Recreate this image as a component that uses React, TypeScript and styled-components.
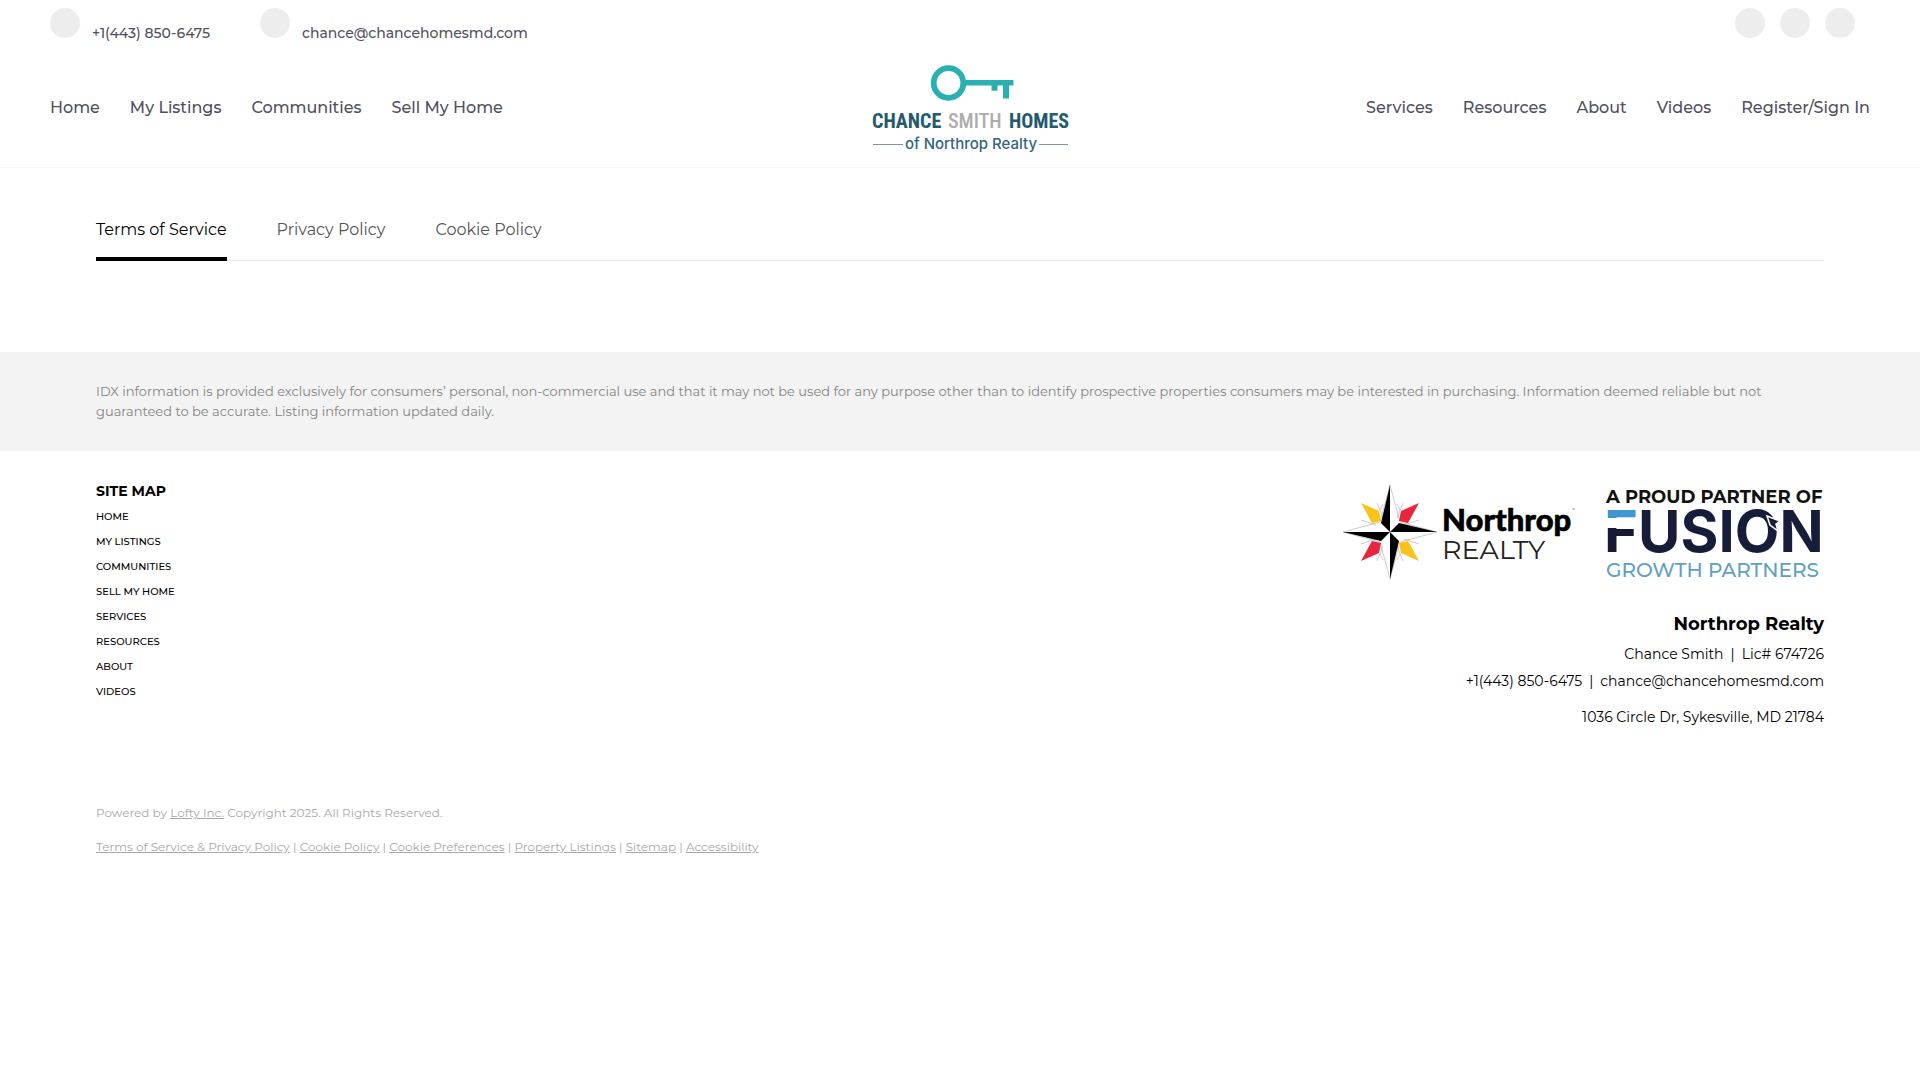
import React from "react";
import styled, { createGlobalStyle } from "styled-components";

const Global = createGlobalStyle`
  *, *::before, *::after { box-sizing: border-box; }
  body { margin: 0; background: #fff; color: #000; font-family: Montserrat, Inter, "Open Sans", sans-serif; }
  a { color: inherit; text-decoration: none; }
  ul { list-style: none; margin: 0; padding: 0; }
  h2, h3, p { margin: 0; }
`;

const Header = styled.header`
  border-bottom: 1px solid #f5f5f5;
  padding: 0 50px;
  color: #515060;
  font-weight: 500;
`;
const TopBar = styled.div`
  display: flex;
  justify-content: space-between;
  padding: 8px 0 9px;
`;
const Contacts = styled.div`
  display: flex;
  gap: 50px;
`;
const Contact = styled.a`
  display: flex;
  gap: 12px;
  height: 30px;
  font-size: 14px;
  line-height: 20px;
`;
const ContactText = styled.span`
  padding-top: 15px;
`;
const Dot = styled.span`
  display: block;
  width: 30px;
  height: 30px;
  border-radius: 50%;
  background: #ededed;
`;
const Socials = styled.div`
  display: flex;
  gap: 15px;
  padding-right: 15px;
`;
const NavBar = styled.nav`
  display: grid;
  grid-template-columns: 1fr auto 1fr;
  align-items: center;
  height: 120px;
`;
const NavList = styled.ul<{ $end?: boolean }>`
  display: flex;
  gap: 30px;
  justify-content: ${(p) => (p.$end ? "flex-end" : "flex-start")};
  padding-top: 2px;
  font-size: 16px;
  line-height: 24px;
`;
const Logo = styled.svg`
  display: block;
`;

const Main = styled.main`
  padding: 40px 5% 91px;
`;
const Tabs = styled.div`
  display: flex;
  gap: 50px;
  border-bottom: 1px solid #ebebeb;
`;
const Tab = styled.button<{ $active?: boolean }>`
  border: 0;
  border-bottom: 4px solid ${(p) => (p.$active ? "#000" : "transparent")};
  margin-bottom: -1px;
  padding: 9px 0 14px;
  background: none;
  font: inherit;
  font-size: 16px;
  line-height: 26px;
  color: ${(p) => (p.$active ? "#000" : "#555")};
  cursor: pointer;
`;

const Disclaimer = styled.section`
  padding: 29px 5% 30px;
  background: #f3f3f3;
  color: #848484;
  font-size: 13px;
  line-height: 20px;
`;
const Footer = styled.footer`
  padding: 30px 5%;
`;
const FooterTop = styled.div`
  display: flex;
  justify-content: space-between;
`;
const MapTitle = styled.h3`
  font-size: 14px;
  line-height: 20px;
  font-weight: 700;
  margin-bottom: 3px;
`;
const MapList = styled.ul`
  font-size: 10px;
  line-height: 25px;
  font-weight: 500;
`;
const Company = styled.div`
  text-align: right;
  font-size: 14px;
  line-height: 27px;
`;
const Partners = styled.div`
  display: flex;
  gap: 27px;
  justify-content: flex-end;
  margin-bottom: 28px;
`;
const CompanyName = styled.h2`
  font-size: 18px;
  line-height: 30px;
  font-weight: 700;
  margin-bottom: 2px;
`;
const Sep = styled.span`
  padding: 0 7px;
`;
const Address = styled.p`
  padding-top: 9px;
`;
const Legal = styled.div`
  display: grid;
  gap: 14px;
  margin-top: 72px;
  color: #a8a8a8;
  font-size: 12px;
  line-height: 20px;
  a { text-decoration: underline; }
`;

const leftNav = ["Home", "My Listings", "Communities", "Sell My Home"];
const rightNav = ["Services", "Resources", "About", "Videos", "Register/Sign In"];
const siteMap = [...leftNav, "Services", "Resources", "About", "Videos"];
const legalLinks = ["Terms of Service & Privacy Policy", "Cookie Policy", "Cookie Preferences", "Property Listings", "Sitemap", "Accessibility"];

const BrandLogo = () => (
  <Logo width="220" height="90" viewBox="0 0 220 90" role="img" aria-label="Chance Smith Homes">
    <g fill="#2ab0b0">
      <circle cx="98.500" cy="21" r="14.8" fill="none" stroke="#2ab0b0" strokeWidth="5.8" />
      <path d="M115 18h48.500v5.400h-4.500v13h-6v-13h-5.500v5.300h-6v-5.300H115z" />
    </g>
    <g fontFamily="'Roboto Condensed', Roboto, sans-serif" fontWeight="700" fontSize="20" fill="#235a70">
      <text x="22" y="66">CHANCE</text>
      <text x="98" y="66" fill="#adadad" fontWeight="500">SMITH</text>
      <text x="159" y="66">HOMES</text>
    </g>
    <path d="M23 82.500h30M189 82.500h29" stroke="#7f979e" />
    <text x="121" y="87" textAnchor="middle" fontFamily="Inter, sans-serif" fontWeight="500" fontSize="15" fill="#33657b">of Northrop Realty</text>
  </Logo>
);

const NorthropLogo = () => (
  <Logo width="236" height="100" viewBox="0 0 236 100" role="img" aria-label="Northrop Realty">
    <g transform="translate(49 51)">
      <g fill="none" stroke="#b5b5b5" strokeWidth="0.700">
        <path d="M0-47 10-10 47 0 10 10 0 47-10 10-47 0-10-10z" />
        <path d="M-7-14-13-29M-14-7-29-12M7-14 13-29M14-7 29-12M-7 14-13 29M-14 7-29 12M7 14 13 29M14 7 29 12M-10-22-7-28M10-22 7-28M-10 22-7 28M10 22 7 28" />
      </g>
      <path d="M-29-29-11-21-9-11-18-9z" fill="#f9c319" />
      <path d="M29 29 11 21 9 11 18 9z" fill="#f9c319" />
      <path d="M29-29 11-21 9-11 18-9z" fill="#e9263d" />
      <path d="M-29 29-11 21-9 11-18 9z" fill="#e9263d" />
      <path d="M0-47V0L-9-9zM47 0H0L9-9zM0 47V0L9 9zM-47 0H0L-9 9z" fill="#000" />
    </g>
    <text x="101" y="50" fontFamily="Lato, sans-serif" fontWeight="900" fontSize="31" stroke="#000" strokeWidth="0.6">Northrop</text>
    <text x="101" y="78" fontFamily="Montserrat, sans-serif" fontSize="27" fill="#222">REALTY</text>
    <path d="M231 28h3" stroke="#999" />
  </Logo>
);

const FusionLogo = () => (
  <Logo width="220" height="100" viewBox="0 0 220 100" role="img" aria-label="A proud partner of Fusion Growth Partners">
    <defs>
      <linearGradient id="fusionF" gradientUnits="userSpaceOnUse" x1="0" x2="0" y1="29" y2="71">
        <stop offset="0.200" stopColor="#3f97cf" />
        <stop offset="0.200" stopColor="#fff" />
        <stop offset="0.420" stopColor="#fff" />
        <stop offset="0.420" stopColor="#171a33" />
      </linearGradient>
    </defs>
    <g fontFamily="Montserrat, sans-serif">
      <text x="2" y="22" fontWeight="700" fontSize="18" fill="#111">A PROUD PARTNER OF</text>
      <text x="0" y="71" fontFamily="Inter, sans-serif" fontWeight="700" fontSize="58" fill="#161d38"><tspan fill="url(#fusionF)">F</tspan>USION</text>
      <text x="2" y="96" fontWeight="500" fontSize="20" fill="#629fc2">GROWTH PARTNERS</text>
    </g>
    <path d="M163 35l13 5-4 3 2 7-8-6z" fill="#161d38" stroke="#fff" strokeWidth="1.500" />
  </Logo>
);

const NavItems = ({ items, end }: { items: string[]; end?: boolean }) => (
  <NavList $end={end}>
    {items.map((t) => (
      <li key={t}><a href="#">{t}</a></li>
    ))}
  </NavList>
);

export default function App() {
  return (
    <>
      <Global />
      <Header>
        <TopBar>
          <Contacts>
            <Contact href="tel:+14438506475"><Dot /><ContactText>+1(443) 850-6475</ContactText></Contact>
            <Contact href="mailto:chance@chancehomesmd.com"><Dot /><ContactText>chance@chancehomesmd.com</ContactText></Contact>
          </Contacts>
          <Socials>
            <a href="#" aria-label="Facebook"><Dot /></a>
            <a href="#" aria-label="Instagram"><Dot /></a>
            <a href="#" aria-label="YouTube"><Dot /></a>
          </Socials>
        </TopBar>
        <NavBar>
          <NavItems items={leftNav} />
          <a href="#" aria-label="Chance Smith Homes"><BrandLogo /></a>
          <NavItems items={rightNav} end />
        </NavBar>
      </Header>
      <Main>
        <Tabs>
          <Tab type="button" $active>Terms of Service</Tab>
          <Tab type="button">Privacy Policy</Tab>
          <Tab type="button">Cookie Policy</Tab>
        </Tabs>
      </Main>
      <Disclaimer>
        <p>IDX information is provided exclusively for consumers’ personal, non-commercial use and that it may not be used for any purpose other than to identify prospective properties consumers may be interested in purchasing. Information deemed reliable but not guaranteed to be accurate. Listing information updated daily.</p>
      </Disclaimer>
      <Footer>
        <FooterTop>
          <nav aria-label="Site map">
            <MapTitle>SITE MAP</MapTitle>
            <MapList>
              {siteMap.map((t) => (
                <li key={t}><a href="#">{t.toUpperCase()}</a></li>
              ))}
            </MapList>
          </nav>
          <Company>
            <Partners><NorthropLogo /><FusionLogo /></Partners>
            <CompanyName>Northrop Realty</CompanyName>
            <p>Chance Smith<Sep>|</Sep>Lic# 674726</p>
            <p><a href="tel:+14438506475">+1(443) 850-6475</a><Sep>|</Sep><a href="mailto:chance@chancehomesmd.com">chance@chancehomesmd.com</a></p>
            <Address>1036 Circle Dr, Sykesville, MD 21784</Address>
          </Company>
        </FooterTop>
        <Legal>
          <p>Powered by <a href="#">Lofty Inc.</a> Copyright 2025. All Rights Reserved.</p>
          <p>
            {legalLinks.map((t, i) => (
              <React.Fragment key={t}>{i > 0 && " | "}<a href="#">{t}</a></React.Fragment>
            ))}
          </p>
        </Legal>
      </Footer>
    </>
  );
}
